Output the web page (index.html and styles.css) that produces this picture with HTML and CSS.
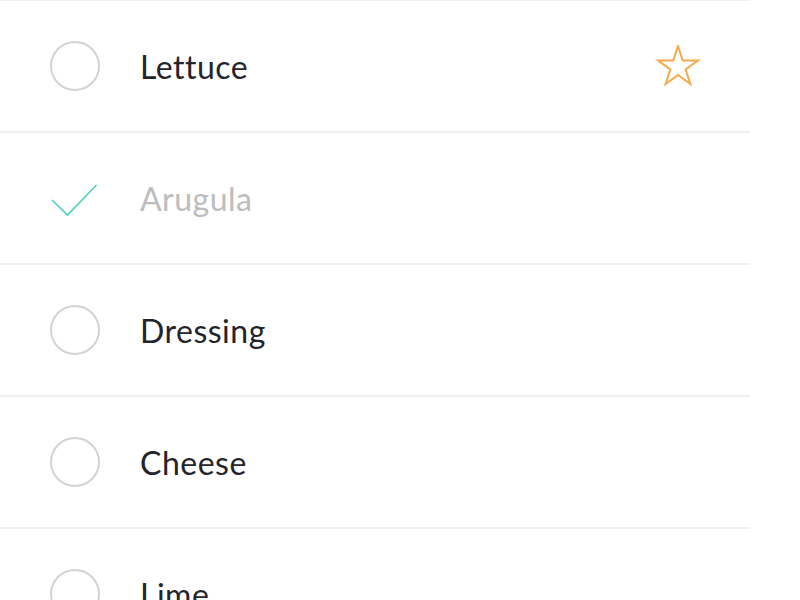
FILE: index.html
```html
<!DOCTYPE html>
<html>
<head>
<meta charset="utf-8">
<link rel="stylesheet" href="styles.css">
</head>
<body>
<ul class="list">
  <li class="item">
    <span class="circle"></span>
    <span class="label">Lettuce</span>
    <svg class="star" width="46" height="42" viewBox="0 0 46 42"><polygon points="23,1 27.71,15.51 42.97,15.51 30.63,24.48 35.34,38.99 23,30.02 10.66,38.99 15.37,24.48 3.03,15.51 18.29,15.51" fill="none" stroke="#f6a94a" stroke-width="2" stroke-linejoin="miter"/></svg>
  </li>
  <li class="item done">
    <svg class="check" width="50" height="50" viewBox="0 0 50 50"><polyline points="2,28 17.5,43 46.5,13" fill="none" stroke="#4fcfbf" stroke-width="1.6"/></svg>
    <span class="label">Arugula</span>
  </li>
  <li class="item">
    <span class="circle"></span>
    <span class="label">Dressing</span>
  </li>
  <li class="item">
    <span class="circle"></span>
    <span class="label">Cheese</span>
  </li>
  <li class="item">
    <span class="circle"></span>
    <span class="label">Lime</span>
  </li>
</ul>
</body>
</html>
```
FILE: styles.css
```css
html, body {
  margin: 0;
  padding: 0;
  background: #ffffff;
  overflow: hidden;
}
.list {
  list-style: none;
  margin: -1px 0 0 0;
  padding: 0;
  width: 750px;
}
.item {
  display: flex;
  align-items: center;
  height: 130px;
  border-top: 2px solid #efefef;
  padding-left: 50px;
  padding-right: 50px;
}
.circle {
  width: 46px;
  height: 46px;
  border: 2px solid #d3d3d3;
  border-radius: 50%;
  flex: none;
}
.check {
  flex: none;
  display: block;
  margin-top: -2px;
}
.label {
  margin-left: 40px;
  font-family: "Lato", "Liberation Sans", sans-serif;
  font-size: 32px;
  font-weight: 400;
  color: #24242c;
  letter-spacing: 0.5px;
  flex: 1;
}
.done .label {
  color: #bdbdbd;
}
.star {
  flex: none;
  display: block;
  margin-right: -1px;
}
```
